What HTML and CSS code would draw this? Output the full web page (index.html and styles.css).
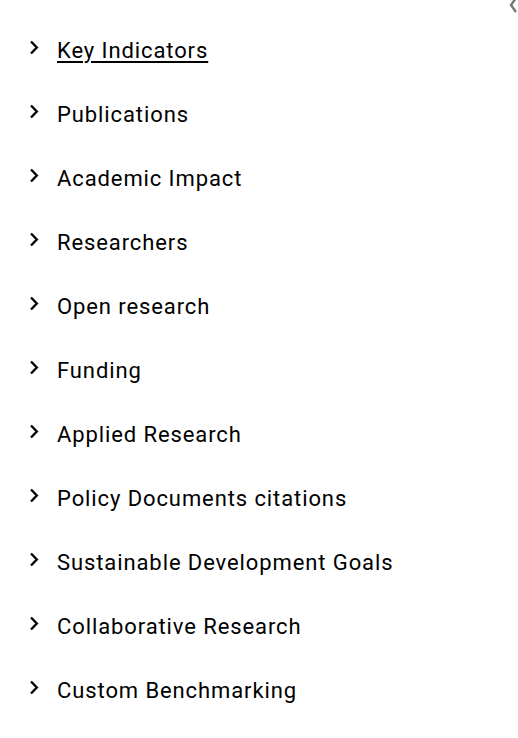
FILE: index.html
```html
<!DOCTYPE html>
<html lang="en">

<head>
    <meta charset="UTF-8">
    <meta name="viewport" content="width=device-width, initial-scale=1.0">
    <title>Menu</title>
    <link rel="stylesheet" href="styles.css">
</head>

<body>
    <div class="panel">
        <span class="collapse">
            <svg width="10" height="14" viewBox="0 0 10 14"><path d="M8 -2 L3 5 L8 12" fill="none" stroke="#777" stroke-width="2.4"/></svg>
        </span>
        <ul class="menu">
            <li class="item active"><span class="chev"><svg width="10" height="15" viewBox="0 0 10 15"><path d="M2 1.5 L7.8 7.5 L2 13.5" fill="none" stroke="#000" stroke-width="2.4"/></svg></span><a href="#">Key Indicators</a></li>
            <li class="item"><span class="chev"><svg width="10" height="15" viewBox="0 0 10 15"><path d="M2 1.5 L7.8 7.5 L2 13.5" fill="none" stroke="#000" stroke-width="2.4"/></svg></span><a href="#">Publications</a></li>
            <li class="item"><span class="chev"><svg width="10" height="15" viewBox="0 0 10 15"><path d="M2 1.5 L7.8 7.5 L2 13.5" fill="none" stroke="#000" stroke-width="2.4"/></svg></span><a href="#">Academic Impact</a></li>
            <li class="item"><span class="chev"><svg width="10" height="15" viewBox="0 0 10 15"><path d="M2 1.5 L7.8 7.5 L2 13.5" fill="none" stroke="#000" stroke-width="2.4"/></svg></span><a href="#">Researchers</a></li>
            <li class="item"><span class="chev"><svg width="10" height="15" viewBox="0 0 10 15"><path d="M2 1.5 L7.8 7.5 L2 13.5" fill="none" stroke="#000" stroke-width="2.4"/></svg></span><a href="#">Open research</a></li>
            <li class="item"><span class="chev"><svg width="10" height="15" viewBox="0 0 10 15"><path d="M2 1.5 L7.8 7.5 L2 13.5" fill="none" stroke="#000" stroke-width="2.4"/></svg></span><a href="#">Funding</a></li>
            <li class="item"><span class="chev"><svg width="10" height="15" viewBox="0 0 10 15"><path d="M2 1.5 L7.8 7.5 L2 13.5" fill="none" stroke="#000" stroke-width="2.4"/></svg></span><a href="#">Applied Research</a></li>
            <li class="item"><span class="chev"><svg width="10" height="15" viewBox="0 0 10 15"><path d="M2 1.5 L7.8 7.5 L2 13.5" fill="none" stroke="#000" stroke-width="2.4"/></svg></span><a href="#">Policy Documents citations</a></li>
            <li class="item"><span class="chev"><svg width="10" height="15" viewBox="0 0 10 15"><path d="M2 1.5 L7.8 7.5 L2 13.5" fill="none" stroke="#000" stroke-width="2.4"/></svg></span><a href="#">Sustainable Development Goals</a></li>
            <li class="item"><span class="chev"><svg width="10" height="15" viewBox="0 0 10 15"><path d="M2 1.5 L7.8 7.5 L2 13.5" fill="none" stroke="#000" stroke-width="2.4"/></svg></span><a href="#">Collaborative Research</a></li>
            <li class="item"><span class="chev"><svg width="10" height="15" viewBox="0 0 10 15"><path d="M2 1.5 L7.8 7.5 L2 13.5" fill="none" stroke="#000" stroke-width="2.4"/></svg></span><a href="#">Custom Benchmarking</a></li>
        </ul>
    </div>
</body>

</html>
```

FILE: styles.css
```css
* {
    box-sizing: border-box;
    font-family: Roboto, sans-serif;
}

body {
    margin: 0;
    padding: 0;
    background: #fff;
}

.panel {
    position: relative;
    width: 518px;
    min-height: 738px;
}

.collapse {
    position: absolute;
    top: 0;
    right: 0;
    line-height: 0;
}

.menu {
    list-style: none;
    margin: 0;
    padding: 18px 0 0 29px;
}

.item {
    display: flex;
    align-items: center;
    height: 64px;
}

.chev {
    display: flex;
    width: 28px;
    margin-top: -6px;
}

.item a {
    font-size: 22px;
    letter-spacing: 0.9px;
    color: #000;
    text-decoration: none;
}

.item.active a {
    text-decoration: underline;
    text-underline-offset: 3px;
}
```
